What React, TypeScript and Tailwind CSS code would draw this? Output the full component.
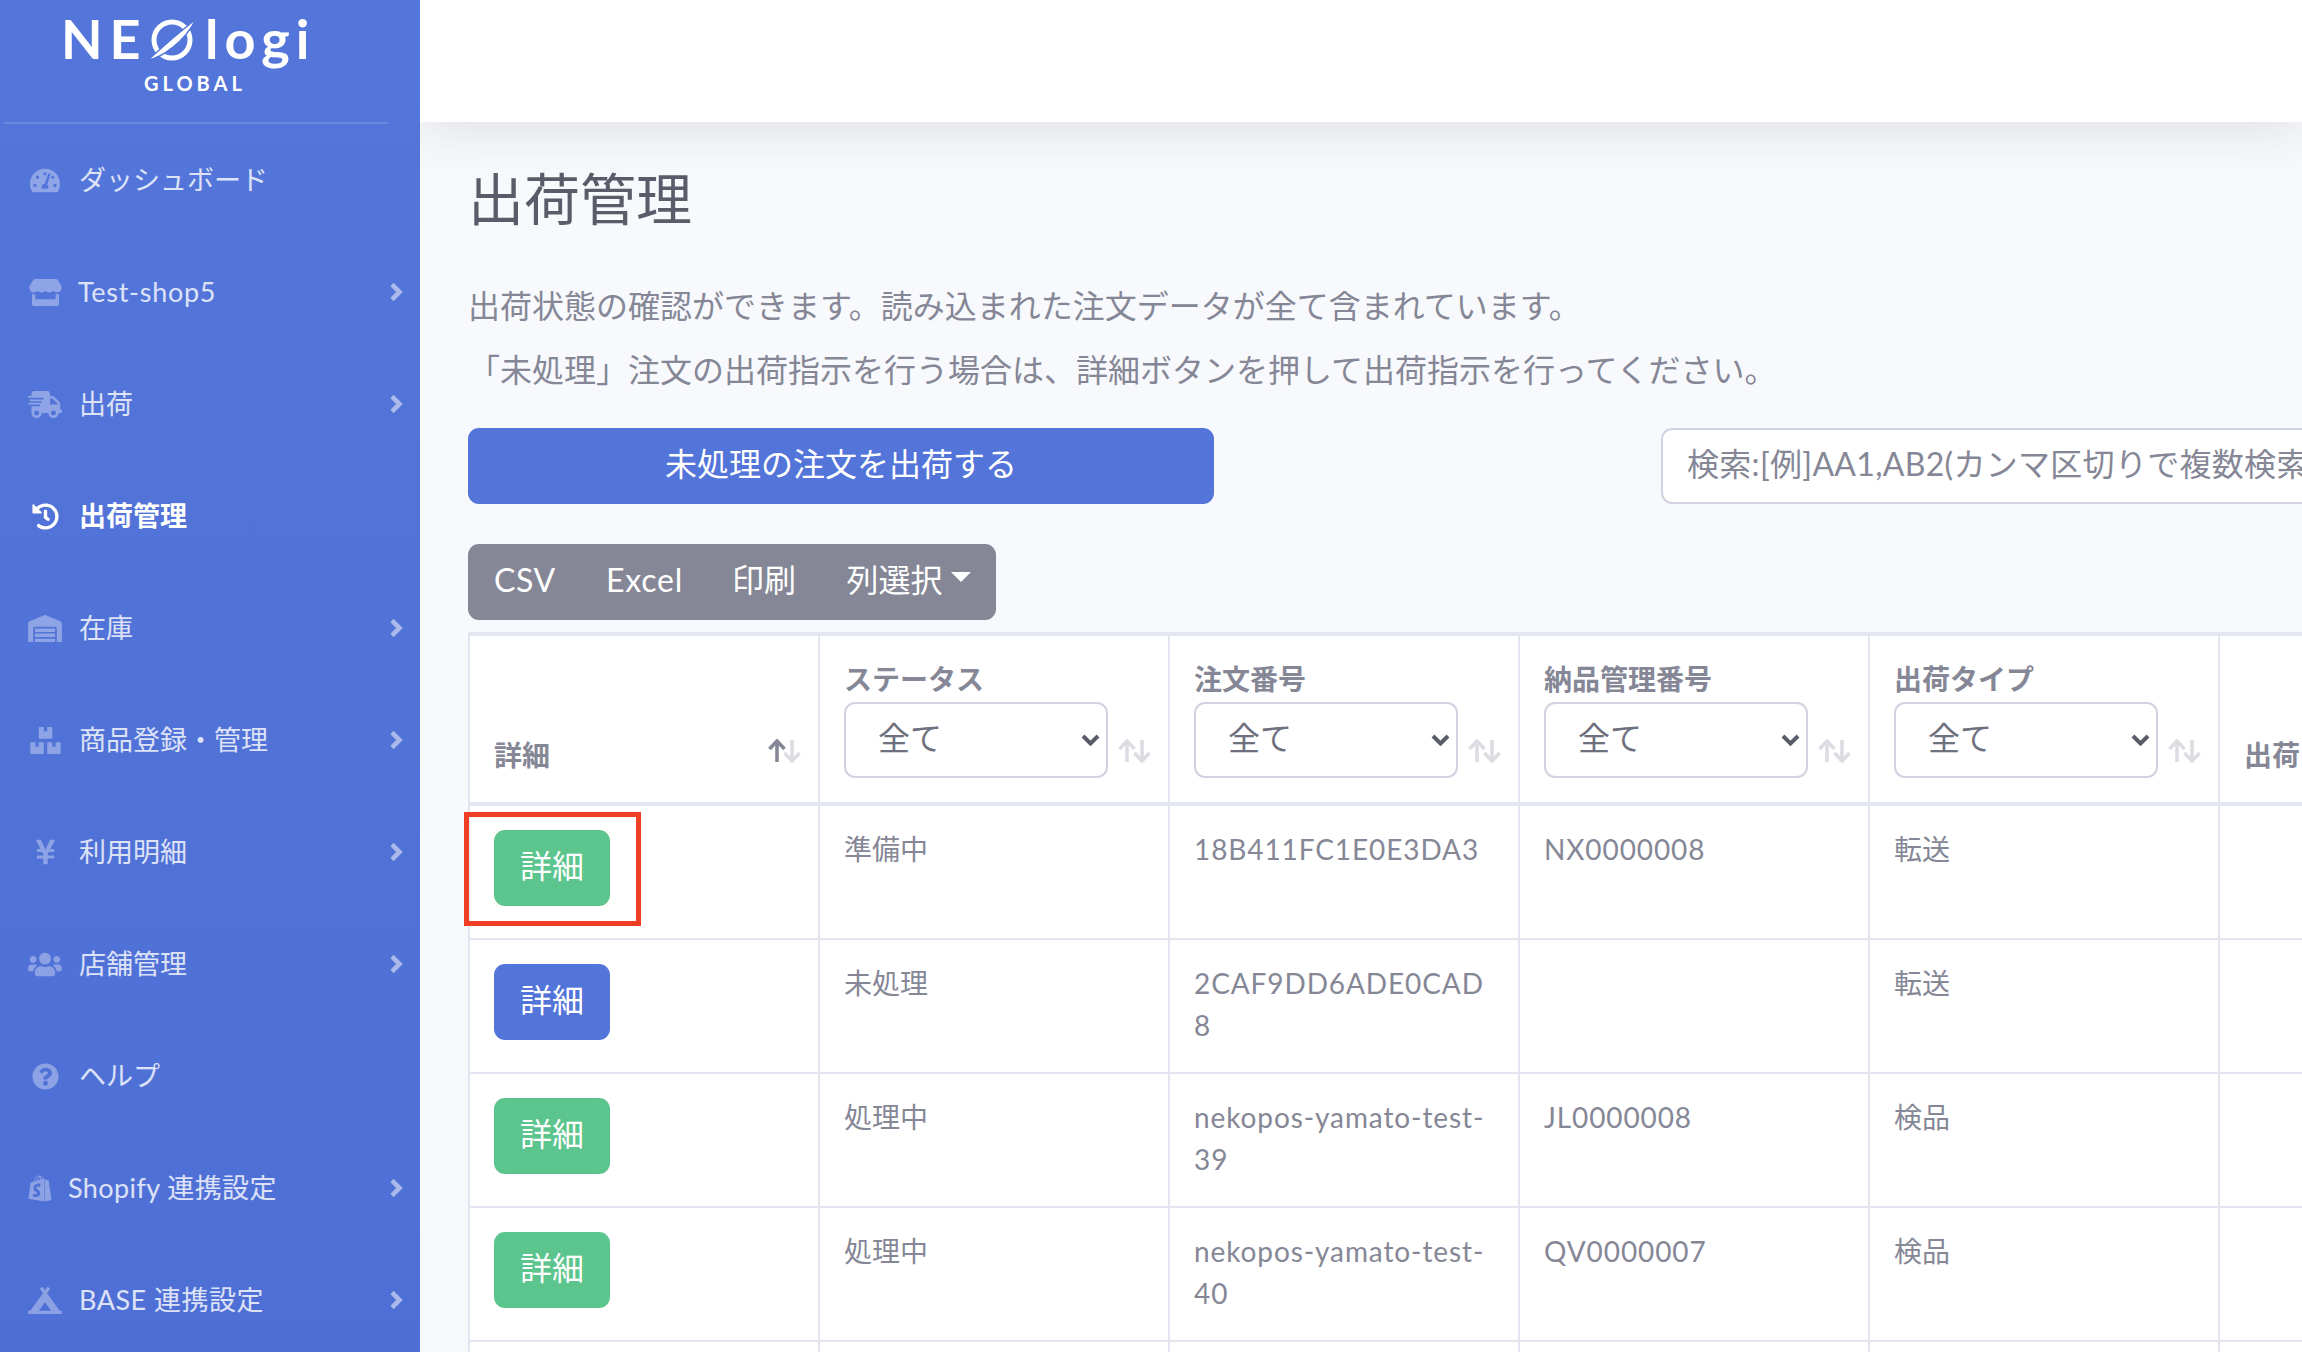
import React from "react";
import {
  FaTachometerAlt, FaStore, FaShippingFast, FaHistory, FaWarehouse, FaBoxes, FaYenSign,
  FaUsers, FaQuestionCircle, FaShopify, FaCampground,
} from "react-icons/fa";

type NavItem = {
  label: string;
  Icon: React.ComponentType<{ className?: string }>;
  iconClass: string;
  boxClass: string;
  textClass?: string;
  arrow?: boolean;
  active?: boolean;
};

const nav: NavItem[] = [
  { label: "ダッシュボード", Icon: FaTachometerAlt, iconClass: "h-[27px] w-[30px]", boxClass: "w-[34px] mr-[17px]" },
  { label: "Test-shop5", Icon: FaStore, iconClass: "h-[27px] w-[33px]", boxClass: "w-[34px] mr-[16px]", textClass: "tracking-[0.7px]", arrow: true },
  { label: "出荷", Icon: FaShippingFast, iconClass: "h-[27px] w-[34px]", boxClass: "w-[34px] mr-[17px]", arrow: true },
  { label: "出荷管理", Icon: FaHistory, iconClass: "h-[27px] w-[27px]", boxClass: "w-[34px] mr-[17px]", active: true },
  { label: "在庫", Icon: FaWarehouse, iconClass: "h-[27px] w-[34px]", boxClass: "w-[34px] mr-[17px]", arrow: true },
  { label: "商品登録・管理", Icon: FaBoxes, iconClass: "h-[27px] w-[31px]", boxClass: "w-[34px] mr-[17px]", arrow: true },
  { label: "利用明細", Icon: FaYenSign, iconClass: "h-[28px] w-[21px]", boxClass: "w-[34px] mr-[17px]", arrow: true },
  { label: "店舗管理", Icon: FaUsers, iconClass: "h-[27px] w-[34px]", boxClass: "w-[34px] mr-[17px]", arrow: true },
  { label: "ヘルプ", Icon: FaQuestionCircle, iconClass: "h-[27px] w-[27px]", boxClass: "w-[34px] mr-[17px]" },
  { label: "Shopify 連携設定", Icon: FaShopify, iconClass: "h-[27px] w-[24px]", boxClass: "w-[24px] mr-[16px]", textClass: "tracking-[0.4px]", arrow: true },
  { label: "BASE 連携設定", Icon: FaCampground, iconClass: "h-[27px] w-[34px]", boxClass: "w-[34px] mr-[17px]", textClass: "tracking-[0.5px]", arrow: true },
];

const rows = [
  { color: "bg-[#5cc58d]", status: "準備中", order: "18B411FC1E0E3DA3", slip: "NX0000008", type: "転送", boxed: true },
  { color: "bg-[#5374d9]", status: "未処理", order: "2CAF9DD6ADE0CAD8", slip: "", type: "転送" },
  { color: "bg-[#5cc58d]", status: "処理中", order: "nekopos-yamato-test-39", slip: "JL0000008", type: "検品" },
  { color: "bg-[#5cc58d]", status: "処理中", order: "nekopos-yamato-test-40", slip: "QV0000007", type: "検品" },
];

function SortIcon({ active }: { active?: boolean }) {
  return (
    <svg
      viewBox="0 0 33 24"
      fill="none"
      strokeWidth="3.6"
      className="absolute right-[17px] bottom-[39px] h-[24px] w-[33px]"
    >
      <path d="M24 1v21M16.5 14l7.5 8 7.5-8" stroke="#dcdde3" />
      <path d="M9 23V2M1.5 10 9 2l7.5 8" stroke={active ? "#858796" : "#dcdde3"} />
    </svg>
  );
}

function FilterHead({ title }: { title: string }) {
  return (
    <th className="relative h-[174px] border-t-4 border-b-4 border-l-2 border-[#e3e6f0] px-6 pb-6 pt-6 text-left align-bottom font-bold">
      <div className="h-[42px] leading-[38px]">{title}</div>
      <div className="relative h-[76px] w-[264px]">
        <select className="h-[76px] w-[264px] appearance-none rounded-[11px] border-2 border-[#d1d3e2] bg-white pb-[4px] pl-[32px] text-[32px] font-normal text-[#6e707e]">
          <option>全て</option>
        </select>
        <svg viewBox="0 0 19 12" fill="none" className="pointer-events-none absolute right-[8px] top-[32px] h-[12px] w-[19px]">
          <path d="M2 2l7.5 7.5L17 2" stroke="#5a5c69" strokeWidth="4" />
        </svg>
      </div>
      <SortIcon />
    </th>
  );
}

export default function App() {
  return (
    <div className="flex h-screen w-full overflow-hidden bg-[#f8f9fc] font-['Lato','Noto_Sans_CJK_JP',sans-serif] text-[#858796]">
      <aside className="flex h-full w-[420px] shrink-0 flex-col bg-gradient-to-b from-[#5476da] to-[#4e6fd5]">
        <div className="h-[122px] shrink-0 pl-[61px] pt-[4px] text-white">
          <div className="flex h-[66px] items-start">
            <span className="mt-[3px] w-[86px] shrink-0 text-[54px] font-bold leading-[64px] tracking-[7px]">NE</span>
            <svg viewBox="0 0 50 44" fill="none" className="mt-[14px] h-[44px] w-[50px] shrink-0">
              <circle cx="25" cy="22" r="18" stroke="white" strokeWidth="5" />
              <path d="M1 42C14 40 38 24 49 1C35 12 14 30 1 42Z" fill="white" stroke="#5476da" strokeWidth="1.5" />
            </svg>
            <span className="ml-[8px] mt-[3px] text-[54px] font-bold leading-[64px] tracking-[6px]">logi</span>
          </div>
          <div className="ml-[83px] mt-[1px] text-[20px] font-bold leading-[24px] tracking-[4px]">GLOBAL</div>
        </div>
        <div className="ml-[4px] h-[2px] w-[384px] shrink-0 bg-white/15" />
        <nav className="flex flex-col">
          {nav.map((item) => (
            <div key={item.label} className="flex h-[112px] shrink-0 items-center pl-[28px] text-[27px]">
              <span className={`flex shrink-0 justify-center ${item.boxClass}`}>
                <item.Icon className={`${item.iconClass} ${item.active ? "text-white" : "text-white/35"}`} />
              </span>
              <span className={`${item.textClass ?? ""} ${item.active ? "font-bold text-white" : "text-white/80"}`}>{item.label}</span>
              {item.arrow && (
                <svg viewBox="0 0 14 20" fill="none" className="ml-auto mr-[17px] h-[20px] w-[14px]">
                  <path d="M3 2.5 10.5 10 3 17.5" stroke="#a9b9ec" strokeWidth="4.6" />
                </svg>
              )}
            </div>
          ))}
        </nav>
      </aside>

      <main className="min-w-0 flex-1 overflow-hidden">
        <div className="relative z-10 h-[122px] bg-white shadow-[0_4px_56px_0_rgba(58,59,69,0.15)]" />
        <div className="pl-12">
          <h1 className="mt-[43px] text-[56px] font-normal leading-[67px] text-[#5a5c69]">出荷管理</h1>
          <p className="mt-[50px] text-[32px] leading-[48px]">出荷状態の確認ができます。読み込まれた注文データが全て含まれています。</p>
          <p className="mt-[16px] text-[32px] leading-[48px]">「未処理」注文の出荷指示を行う場合は、詳細ボタンを押して出荷指示を行ってください。</p>

          <div className="mt-[34px] flex items-start">
            <button className="h-[76px] w-[746px] shrink-0 rounded-[11px] bg-[#5374d9] pb-[5px] text-[32px] text-white">未処理の注文を出荷する</button>
            <input
              className="ml-[447px] h-[76px] w-[1000px] shrink-0 rounded-[11px] border-2 border-[#d1d3e2] bg-white pb-[5px] pl-[24px] text-[32px] tracking-[0.3px] placeholder:text-[#858796]"
              placeholder="検索:[例]AA1,AB2(カンマ区切りで複数検索できます)"
            />
          </div>

          <div className="mt-[40px] flex h-[76px] w-[528px] items-center rounded-[11px] bg-[#858796] pb-[5px] text-[32px] text-white">
            <span className="w-[114px] text-center tracking-[0.6px]">CSV</span>
            <span className="w-[125px] text-center tracking-[0.8px]">Excel</span>
            <span className="w-[114px] text-center">印刷</span>
            <span className="flex w-[175px] items-center justify-center gap-[8px]">
              列選択
              <span className="mt-[-6px] h-0 w-0 border-x-[10px] border-t-[10px] border-x-transparent border-t-white" />
            </span>
          </div>

          <table className="mt-[12px] w-[2100px] table-fixed border-separate border-spacing-0 bg-white text-[28px] leading-[42px]">
            <colgroup>
              <col className="w-[350px]" />
              <col className="w-[350px]" />
              <col className="w-[350px]" />
              <col className="w-[350px]" />
              <col className="w-[350px]" />
              <col className="w-[350px]" />
            </colgroup>
            <thead>
              <tr>
                <th className="relative h-[174px] border-t-4 border-b-4 border-l-2 border-[#e3e6f0] px-6 pb-[26px] text-left align-bottom font-bold">
                  詳細
                  <SortIcon active />
                </th>
                <FilterHead title="ステータス" />
                <FilterHead title="注文番号" />
                <FilterHead title="納品管理番号" />
                <FilterHead title="出荷タイプ" />
                <th className="h-[174px] border-t-4 border-b-4 border-l-2 border-[#e3e6f0] px-6 pb-[26px] text-left align-bottom font-bold whitespace-nowrap">
                  出荷日
                </th>
              </tr>
            </thead>
            <tbody>
              {rows.map((r) => (
                <tr key={r.order}>
                  <td className="relative h-[134px] border-b-2 border-l-2 border-[#e3e6f0] px-6 pt-6 align-top">
                    <button className={`block h-[76px] w-[116px] rounded-[11px] pb-[5px] text-[32px] text-white ${r.color}`}>詳細</button>
                    {r.boxed && <div className="absolute left-[-6px] top-[6px] h-[114px] w-[177px] border-[5px] border-[#ee3e23]" />}
                  </td>
                  <td className="h-[134px] border-b-2 border-l-2 border-[#e3e6f0] px-6 pt-[22px] align-top">{r.status}</td>
                  <td className="h-[134px] border-b-2 border-l-2 border-[#e3e6f0] px-6 pt-[22px] align-top break-words tracking-[0.9px]">{r.order}</td>
                  <td className="h-[134px] border-b-2 border-l-2 border-[#e3e6f0] px-6 pt-[22px] align-top tracking-[0.9px]">{r.slip}</td>
                  <td className="h-[134px] border-b-2 border-l-2 border-[#e3e6f0] px-6 pt-[22px] align-top">{r.type}</td>
                  <td className="h-[134px] border-b-2 border-l-2 border-[#e3e6f0] px-6 pt-[22px] align-top" />
                </tr>
              ))}
              <tr>
                <td className="h-[134px] border-l-2 border-[#e3e6f0]" />
                <td className="h-[134px] border-l-2 border-[#e3e6f0]" />
                <td className="h-[134px] border-l-2 border-[#e3e6f0]" />
                <td className="h-[134px] border-l-2 border-[#e3e6f0]" />
                <td className="h-[134px] border-l-2 border-[#e3e6f0]" />
                <td className="h-[134px] border-l-2 border-[#e3e6f0]" />
              </tr>
            </tbody>
          </table>
        </div>
      </main>
    </div>
  );
}
